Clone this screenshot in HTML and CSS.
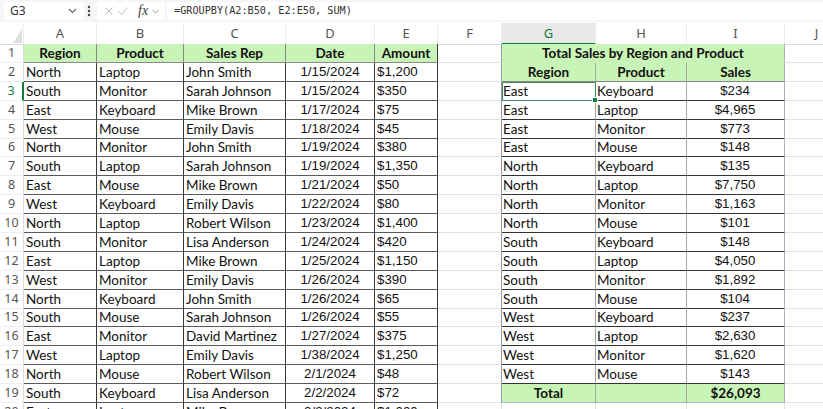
FILE: index.html
```html
<!DOCTYPE html>
<html>
<head>
<meta charset="utf-8">
<link rel="stylesheet" href="styles.css">
</head>
<body>
<div class="fbar">
  <div class="namebox"><span class="ref">G3</span><svg width="9" height="6" viewBox="0 0 9 6"><path d="M1 1l3.5 3.5L8 1" fill="none" stroke="#666" stroke-width="1.1"/></svg></div>
  <svg class="dots" width="4" height="12" viewBox="0 0 4 12"><circle cx="2" cy="2" r="1.2" fill="#444"/><circle cx="2" cy="6" r="1.2" fill="#444"/><circle cx="2" cy="10" r="1.2" fill="#444"/></svg>
  <div class="acts">
    <svg class="ic-x" width="8" height="8" viewBox="0 0 8 8"><path d="M0.5 0.5l7 7M7.5 0.5l-7 7" stroke="#bdbdbd" stroke-width="1"/></svg>
    <svg class="ic-ok" width="10" height="8" viewBox="0 0 10 8"><path d="M0.5 4.5l3 3 6-7" fill="none" stroke="#bdbdbd" stroke-width="1"/></svg>
    <span class="fx">fx</span>
    <svg class="ic-dd" width="7" height="5" viewBox="0 0 7 5"><path d="M0.5 1l3 3 3-3" fill="none" stroke="#999" stroke-width="1"/></svg>
  </div>
  <div class="formula">=GROUPBY(A2:B50, E2:E50, SUM)</div>
</div>

<div class="sheet">
  <div class="row colh">
    <div class="ch corner"><span class="tri"></span></div>
    <div class="ch">A</div><div class="ch">B</div><div class="ch">C</div><div class="ch">D</div><div class="ch">E</div><div class="ch">F</div><div class="ch sel">G</div><div class="ch">H</div><div class="ch">I</div><div class="ch">J</div>
  </div>

  <div class="row">
    <div class="rn">1</div>
    <div class="c t hd">Region</div><div class="c t hd">Product</div><div class="c t hd">Sales Rep</div><div class="c t hd">Date</div><div class="c t hd">Amount</div>
    <div class="c fe"></div>
    <div class="c hd title">Total Sales by Region and Product</div>
    <div class="c"></div>
  </div>

  <div class="row">
    <div class="rn">2</div>
    <div class="c t">North</div><div class="c t">Laptop</div><div class="c t">John Smith</div><div class="c t num ctr">1/15/2024</div><div class="c t num">$1,200</div>
    <div class="c fe"></div>
    <div class="c hd gh">Region</div><div class="c hd gh">Product</div><div class="c hd gh gi">Sales</div>
    <div class="c"></div>
  </div>

  <div class="row">
    <div class="rn sel">3</div>
    <div class="c t">South</div><div class="c t">Monitor</div><div class="c t">Sarah Johnson</div><div class="c t num ctr">1/15/2024</div><div class="c t num">$350</div>
    <div class="c fe"></div>
    <div class="c g cur">East</div><div class="c g">Keyboard</div><div class="c g num ctr gi">$234</div>
    <div class="c"></div>
  </div>

  <div class="row">
    <div class="rn">4</div>
    <div class="c t">East</div><div class="c t">Keyboard</div><div class="c t">Mike Brown</div><div class="c t num ctr">1/17/2024</div><div class="c t num">$75</div>
    <div class="c fe"></div>
    <div class="c g">East</div><div class="c g">Laptop</div><div class="c g num ctr gi">$4,965</div>
    <div class="c"></div>
  </div>

  <div class="row">
    <div class="rn">5</div>
    <div class="c t">West</div><div class="c t">Mouse</div><div class="c t">Emily Davis</div><div class="c t num ctr">1/18/2024</div><div class="c t num">$45</div>
    <div class="c fe"></div>
    <div class="c g">East</div><div class="c g">Monitor</div><div class="c g num ctr gi">$773</div>
    <div class="c"></div>
  </div>

  <div class="row">
    <div class="rn">6</div>
    <div class="c t">North</div><div class="c t">Monitor</div><div class="c t">John Smith</div><div class="c t num ctr">1/19/2024</div><div class="c t num">$380</div>
    <div class="c fe"></div>
    <div class="c g">East</div><div class="c g">Mouse</div><div class="c g num ctr gi">$148</div>
    <div class="c"></div>
  </div>

  <div class="row">
    <div class="rn">7</div>
    <div class="c t">South</div><div class="c t">Laptop</div><div class="c t">Sarah Johnson</div><div class="c t num ctr">1/19/2024</div><div class="c t num">$1,350</div>
    <div class="c fe"></div>
    <div class="c g">North</div><div class="c g">Keyboard</div><div class="c g num ctr gi">$135</div>
    <div class="c"></div>
  </div>

  <div class="row">
    <div class="rn">8</div>
    <div class="c t">East</div><div class="c t">Mouse</div><div class="c t">Mike Brown</div><div class="c t num ctr">1/21/2024</div><div class="c t num">$50</div>
    <div class="c fe"></div>
    <div class="c g">North</div><div class="c g">Laptop</div><div class="c g num ctr gi">$7,750</div>
    <div class="c"></div>
  </div>

  <div class="row">
    <div class="rn">9</div>
    <div class="c t">West</div><div class="c t">Keyboard</div><div class="c t">Emily Davis</div><div class="c t num ctr">1/22/2024</div><div class="c t num">$80</div>
    <div class="c fe"></div>
    <div class="c g">North</div><div class="c g">Monitor</div><div class="c g num ctr gi">$1,163</div>
    <div class="c"></div>
  </div>

  <div class="row">
    <div class="rn">10</div>
    <div class="c t">North</div><div class="c t">Laptop</div><div class="c t">Robert Wilson</div><div class="c t num ctr">1/23/2024</div><div class="c t num">$1,400</div>
    <div class="c fe"></div>
    <div class="c g">North</div><div class="c g">Mouse</div><div class="c g num ctr gi">$101</div>
    <div class="c"></div>
  </div>

  <div class="row">
    <div class="rn">11</div>
    <div class="c t">South</div><div class="c t">Monitor</div><div class="c t">Lisa Anderson</div><div class="c t num ctr">1/24/2024</div><div class="c t num">$420</div>
    <div class="c fe"></div>
    <div class="c g">South</div><div class="c g">Keyboard</div><div class="c g num ctr gi">$148</div>
    <div class="c"></div>
  </div>

  <div class="row">
    <div class="rn">12</div>
    <div class="c t">East</div><div class="c t">Laptop</div><div class="c t">Mike Brown</div><div class="c t num ctr">1/25/2024</div><div class="c t num">$1,150</div>
    <div class="c fe"></div>
    <div class="c g">South</div><div class="c g">Laptop</div><div class="c g num ctr gi">$4,050</div>
    <div class="c"></div>
  </div>

  <div class="row">
    <div class="rn">13</div>
    <div class="c t">West</div><div class="c t">Monitor</div><div class="c t">Emily Davis</div><div class="c t num ctr">1/26/2024</div><div class="c t num">$390</div>
    <div class="c fe"></div>
    <div class="c g">South</div><div class="c g">Monitor</div><div class="c g num ctr gi">$1,892</div>
    <div class="c"></div>
  </div>

  <div class="row">
    <div class="rn">14</div>
    <div class="c t">North</div><div class="c t">Keyboard</div><div class="c t">John Smith</div><div class="c t num ctr">1/26/2024</div><div class="c t num">$65</div>
    <div class="c fe"></div>
    <div class="c g">South</div><div class="c g">Mouse</div><div class="c g num ctr gi">$104</div>
    <div class="c"></div>
  </div>

  <div class="row">
    <div class="rn">15</div>
    <div class="c t">South</div><div class="c t">Mouse</div><div class="c t">Sarah Johnson</div><div class="c t num ctr">1/26/2024</div><div class="c t num">$55</div>
    <div class="c fe"></div>
    <div class="c g">West</div><div class="c g">Keyboard</div><div class="c g num ctr gi">$237</div>
    <div class="c"></div>
  </div>

  <div class="row">
    <div class="rn">16</div>
    <div class="c t">East</div><div class="c t">Monitor</div><div class="c t">David Martinez</div><div class="c t num ctr">1/27/2024</div><div class="c t num">$375</div>
    <div class="c fe"></div>
    <div class="c g">West</div><div class="c g">Laptop</div><div class="c g num ctr gi">$2,630</div>
    <div class="c"></div>
  </div>

  <div class="row">
    <div class="rn">17</div>
    <div class="c t">West</div><div class="c t">Laptop</div><div class="c t">Emily Davis</div><div class="c t num ctr">1/38/2024</div><div class="c t num">$1,250</div>
    <div class="c fe"></div>
    <div class="c g">West</div><div class="c g">Monitor</div><div class="c g num ctr gi">$1,620</div>
    <div class="c"></div>
  </div>

  <div class="row">
    <div class="rn">18</div>
    <div class="c t">North</div><div class="c t">Mouse</div><div class="c t">Robert Wilson</div><div class="c t num ctr">2/1/2024</div><div class="c t num">$48</div>
    <div class="c fe"></div>
    <div class="c g">West</div><div class="c g">Mouse</div><div class="c g num ctr gi">$143</div>
    <div class="c"></div>
  </div>

  <div class="row">
    <div class="rn">19</div>
    <div class="c t">South</div><div class="c t">Keyboard</div><div class="c t">Lisa Anderson</div><div class="c t num ctr">2/2/2024</div><div class="c t num">$72</div>
    <div class="c fe"></div>
    <div class="c hd gt">Total</div><div class="c hd gt"></div><div class="c hd gt gi">$26,093</div>
    <div class="c"></div>
  </div>

  <div class="row">
    <div class="rn">20</div>
    <div class="c t">East</div><div class="c t">Laptop</div><div class="c t">Mike Brown</div><div class="c t num ctr">2/3/2024</div><div class="c t num">$1,000</div>
    <div class="c"></div>
    <div class="c"></div><div class="c"></div><div class="c"></div>
    <div class="c"></div>
  </div>
</div>
</body>
</html>
```

FILE: styles.css
```css
html, body {
  margin: 0;
  padding: 0;
}
body {
  width: 823px;
  height: 409px;
  overflow: hidden;
  background: #ffffff;
  font-family: Lato, "Noto Sans", sans-serif;
}

/* formula bar */
.fbar {
  display: flex;
  align-items: center;
  height: 22px;
  background: #f6f6f6;
  margin-bottom: 1px;
}
.namebox {
  box-sizing: border-box;
  margin-left: 4px;
  width: 80px;
  height: 18px;
  background: #ffffff;
  border-radius: 3px;
  display: flex;
  align-items: center;
  justify-content: space-between;
  padding: 0 7px 0 6px;
}
.ref {
  font: 12px/18px "Noto Sans", sans-serif;
  color: #333;
}
.dots {
  margin: 0 6px 0 3px;
}
.acts {
  box-sizing: border-box;
  width: 68px;
  height: 18px;
  background: #ffffff;
  border-radius: 3px;
  display: flex;
  align-items: center;
  padding-left: 8px;
}
.ic-ok { margin-left: 5px; }
.fx {
  margin-left: 10px;
  font: italic 14px/18px "Liberation Serif", serif;
  color: #444;
}
.ic-dd { margin-left: 4px; }
.formula {
  box-sizing: border-box;
  flex: 1;
  height: 18px;
  margin-left: 2px;
  background: #ffffff;
  border-radius: 3px 0 0 3px;
  padding-left: 7px;
  font: 10.2px/18px "DejaVu Sans Mono", monospace;
  color: #333;
}

/* grid */
.row {
  display: grid;
  grid-template-columns: 24px 73px 87px 102px 89px 63px 64px 94px 91px 98px 64px;
  height: 18.9px;
}
.row.colh {
  height: 21px;
}
.ch {
  box-sizing: border-box;
  border-right: 1px solid #ececec;
  border-bottom: 1px solid #dcdcdc;
  font: 13px/20px "Noto Sans", sans-serif;
  color: #555;
  text-align: center;
}
.ch.sel {
  background: #e9e9e9;
  color: #107c41;
  border-bottom: 2px solid #107c41;
}
.corner {
  display: flex;
  justify-content: flex-end;
  align-items: flex-end;
  padding: 0 1px 1px 0;
}
.tri {
  width: 0;
  height: 0;
  border-left: 9px solid transparent;
  border-bottom: 14px solid #dedede;
}
.rn {
  box-sizing: border-box;
  border-right: 1px solid #dadada;
  border-bottom: 1px solid #eeeeee;
  font: 12.5px/18px "Noto Sans", sans-serif;
  color: #555;
  text-align: center;
}
.rn.sel {
  color: #107c41;
  border-right: 2px solid #107c41;
}
.c {
  box-sizing: border-box;
  border-right: 1px solid #e3e3e3;
  border-bottom: 1px solid #e3e3e3;
  padding: 0 2px 0 2px;
  font-size: 13.5px;
  line-height: 18px;
  color: #111;
  white-space: nowrap;
  overflow: hidden;
}
.t {
  border-right-color: #3a3a3a;
  border-bottom-color: #5a5a5a;
}
.hd {
  background: #c9f4b7;
  font-weight: 700;
  text-align: center;
}
.t.hd {
  border-right-color: #8a8a8a;
  border-bottom-color: #8a8a8a;
}
.t.hd:nth-child(6) {
  border-right-color: #3a3a3a;
}
.num {
  font-family: "Liberation Sans", Arial, sans-serif;
  font-size: 13.3px;
}
.ctr {
  text-align: center;
}
.fe {
  border-right-color: #8e9aa8;
}
.title {
  grid-column: span 3;
  border-right-color: #a9b4c2;
  border-bottom-color: #c9f4b7;
}
.gh {
  border-right-color: #a6a6a6;
  border-bottom-color: #8a8a8a;
}
.g {
  padding-left: 1px;
  border-right-color: #a6a6a6;
  border-bottom-color: #333333;
}
.gt {
  border-right-color: #a6a6a6;
  border-bottom-color: #a9b4c2;
}
.gi {
  border-right-color: #a9b4c2;
}
.cur {
  position: relative;
  overflow: visible;
  z-index: 1;
  outline: 1px solid #3f8a5c;
  outline-offset: -1px;
}
.cur::after {
  content: "";
  position: absolute;
  right: -3px;
  bottom: -3px;
  width: 4px;
  height: 4px;
  background: #107c41;
  border: 1px solid #ffffff;
}
```
